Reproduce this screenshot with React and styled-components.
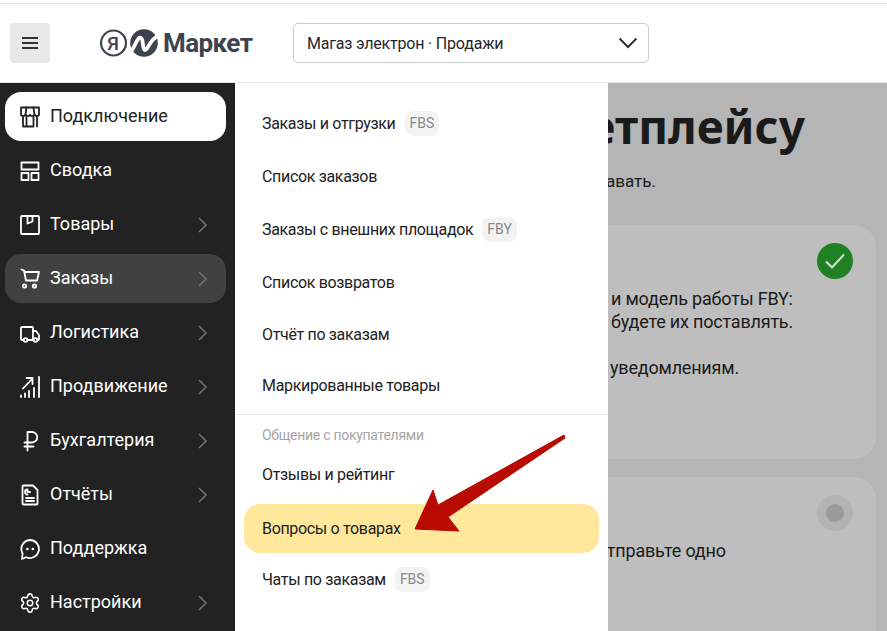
import React from "react";
import styled, { createGlobalStyle } from "styled-components";
import { Settings } from "lucide-react";

const Global = createGlobalStyle`
  html, body { margin: 0; padding: 0; background: #fff; }
  body { font-family: "Roboto", "Noto Sans", "Liberation Sans", sans-serif; color: #1a1a1a; }
  * { box-sizing: border-box; }
`;

const Page = styled.div`
  width: 887px; height: 631px; overflow: hidden;
  display: flex; flex-direction: column; background: #fff;
  padding-top: 3px;
`;
const Header = styled.header`
  height: 80px; flex: none;
  display: flex; align-items: center; padding: 0 238px 0 10px;
  border-top: 1px solid #e0e0e0; border-bottom: 1px solid #e6e6e6;
`;
const MenuButton = styled.button`
  width: 40px; height: 40px; flex: none; border: 0; border-radius: 4px; background: #e8e8e8;
  display: flex; align-items: center; justify-content: center; padding: 0;
`;
const Logo = styled.div`
  width: 243px; flex: none; display: flex; align-items: center; padding-left: 50px;
`;
const LogoWord = styled.span`
  font: 700 26px/40px "Roboto", sans-serif; letter-spacing: -0.6px; color: #3d434e; margin-left: 4px;
`;
const StoreSelect = styled.div`
  flex: 1; height: 40px; border: 1px solid #cbcbcb; border-radius: 5px;
  display: flex; align-items: center; justify-content: space-between; padding: 0 10px 0 13px;
  font-size: 16px; letter-spacing: -0.2px; color: #1f2630;
`;
const Body = styled.div`
  flex: 1; display: flex; min-height: 0;
`;
const Sidebar = styled.nav`
  width: 235px; flex: none; background: #222; padding: 9px 9px 0 5px;
  display: flex; flex-direction: column; gap: 5px; overflow: hidden;
`;
const NavRow = styled.div`
  height: 49px; flex: none; border-radius: 16px; display: flex; align-items: center;
  padding: 0 19px 0 15px; gap: 10px; font-size: 18px; font-weight: 400;
  background: ${(p) => (p.$state === "current" ? "#fff" : p.$state === "open" ? "#414141" : "transparent")};
  color: ${(p) => (p.$state === "current" ? "#222" : "#fff")};
`;
const NavLabel = styled.span` flex: 1; white-space: nowrap; padding-bottom: 2px; `;
const Main = styled.main`
  flex: 1; position: relative; overflow: hidden; background: #b5b5b5; padding: 0 11px 0 0;
`;
const Heading = styled.div`
  display: flex; justify-content: flex-end; padding-right: 71px; margin-top: 10px; height: 73px;
  font: 700 46px/66px "Noto Sans", sans-serif; white-space: nowrap; color: #1a1a1a;
`;
const Subtitle = styled.div`
  display: flex; justify-content: flex-end; padding-right: 220px; height: 59px;
  font-size: 17px; line-height: 30px; white-space: nowrap; color: #1a1a1a;
`;
const Card = styled.section`
  position: relative; border-radius: 22px; background: #bebebe; margin-bottom: 18px;
  height: ${(p) => p.$h}px; padding: ${(p) => p.$top}px 0 0 376px;
`;
const CardLine = styled.div`
  font-size: 18px; letter-spacing: -0.2px; line-height: 23px; white-space: nowrap; color: #1a1a1a;
  height: ${(p) => p.$h || 23}px; margin-left: ${(p) => p.$shift || 0}px;
`;
const StatusDone = styled.div`
  position: absolute; top: 18px; right: 23px; width: 36px; height: 36px; border-radius: 50%;
  background: #1f8024; display: flex; align-items: center; justify-content: center;
`;
const StatusIdle = styled.div`
  position: absolute; top: 18px; right: 23px; width: 36px; height: 36px; border-radius: 50%;
  background: #b3b3b3; display: flex; align-items: center; justify-content: center;
  &::after { content: ""; width: 18px; height: 18px; border-radius: 50%; background: #9a9a9a; }
`;
const Submenu = styled.aside`
  position: absolute; left: 0; top: 0; bottom: 0; width: 373px; background: #fff;
  padding: 14px 9px 0; font-size: 16px; letter-spacing: -0.33px; color: #222;
`;
const SubRow = styled.div`
  height: ${(p) => p.$h || 53}px; border-radius: 16px; display: flex; align-items: center; gap: 9px;
  padding: 0 18px; white-space: nowrap;
  ${(p) => p.$hl && "background: #ffe89c; height: 49px; margin-top: 3px;"}
`;
const Tag = styled.span`
  height: 25px; padding: 0 5px; border-radius: 8px; background: #f3f3f3;
  font-size: 14px; letter-spacing: 0; line-height: 25px; color: #8a8a8a;
`;
const Divider = styled.div` height: 1px; background: #e6e6e6; margin: 3px -9px 0; `;
const GroupTitle = styled.div`
  height: 33px; padding: 8px 18px 0; font-size: 14px; letter-spacing: -0.28px; line-height: 24px; color: #a5a5a5;
`;
const Arrow = styled.svg`
  position: absolute; left: -235px; top: -83px; width: 887px; height: 631px; pointer-events: none;
`;
const GearIcon = styled(Settings)`
  flex: none; width: 22px; height: 22px; margin: 0 -1px;
`;

const s = { fill: "none", stroke: "currentColor", strokeWidth: 1.8, strokeLinecap: "round", strokeLinejoin: "round" };
const Ic = ({ children }) => (
  <svg width="20" height="22" viewBox="0 0 20 22" {...s} style={{ flex: "none" }}>{children}</svg>
);
const icons = {
  store: <Ic><path d="M1 1.500h18v7.500c-1.800 1.800-3.500 1.500-4.500-.5-1.300 2-3.500 2-4.500.2-1 1.800-3.200 1.800-4.500-.2C4.500 10.500 2.800 10.800 1 9Z" /><path d="M6.500 1.500 5.500 8.500M13.500 1.500l1 7" /><path d="M3 10.500V20.500h10.500V11M6.500 11v9.500M17 10.500V20.500" /></Ic>,
  board: <Ic><rect x="1.500" y="2.500" width="17" height="7" /><rect x="1.500" y="13" width="7" height="7" /><rect x="11.500" y="13" width="7" height="7" /></Ic>,
  box: <Ic><rect x="1" y="2" width="18" height="18" rx="1" /><path d="M7.500 2v7.500l5-2V2" /></Ic>,
  cart: <Ic><path d="M1.500 1.500 4 2.500l2 10h11L19 4H4.500" /><circle cx="4.500" cy="18" r="1.700" /><circle cx="14.500" cy="18" r="1.700" /></Ic>,
  truck: <Ic><path d="M3.500 18H2a1 1 0 0 1-1-1V6a1 1 0 0 1 1-1h10a1 1 0 0 1 1 1v12H7.500" /><path d="M13 9h3l3 4v4a1 1 0 0 1-1 1h-.5M13 18h.5" /><circle cx="5.500" cy="18" r="1.900" /><circle cx="15.500" cy="18" r="1.900" /></Ic>,
  growth: <Ic><path d="M3 12.500 12 3M6.500 2h6v6" /><path d="M19 1v20M14 12v9M9 15v6M5 17.500v3.500M1 19.500v1.500" /></Ic>,
  ruble: <Ic><path d="M7.500 20.500V2h4.500a4.800 4.800 0 0 1 0 10.500H4.500M4.500 16.500h9" /></Ic>,
  report: <Ic><path d="M3.500 1.500H13l4.500 4.500v13.500a1 1 0 0 1-1 1h-13a1 1 0 0 1-1-1V2.500a1 1 0 0 1 1-1Z" /><path d="M6 14h8M6 17h8" /><path d="M7.500 10.500a2.500 2.500 0 0 1 0-5v2.500H10" /></Ic>,
  chat: <Ic><path d="M10 2a9 9 0 1 1-3.800 17.200L2 21l.6-5.500A9 9 0 0 1 10 2Z" /><path d="M7.300 11h.2M12.700 11h.2" strokeWidth="2.400" /></Ic>,
  gear: <GearIcon strokeWidth={1.7} />,
};

const Chevron = () => (
  <svg width="9" height="16" viewBox="0 0 9 16" fill="none" stroke="#6f6f6f" strokeWidth="1.600" style={{ flex: "none" }}>
    <path d="M1 1 8 8 1 15" />
  </svg>
);

const nav = [
  ["store", "Подключение", false, "current"],
  ["board", "Сводка", false],
  ["box", "Товары", true],
  ["cart", "Заказы", true, "open"],
  ["truck", "Логистика", true],
  ["growth", "Продвижение", true],
  ["ruble", "Бухгалтерия", true],
  ["report", "Отчёты", true],
  ["chat", "Поддержка", false],
  ["gear", "Настройки", true],
];

export default function App() {
  return (
    <Page>
      <Global />
      <Header>
        <MenuButton aria-label="Меню">
          <svg width="18" height="14" viewBox="0 0 18 14" fill="none" stroke="#333" strokeWidth="2"><path d="M1 2h16M1 7h16M1 12h16" /></svg>
        </MenuButton>
        <Logo>
          <svg width="59" height="28" viewBox="0 0 59 28">
            <circle cx="13.500" cy="14" r="12.500" fill="none" stroke="#3d434e" strokeWidth="2.200" />
            <text x="13" y="20.500" textAnchor="middle" fontFamily="Roboto, sans-serif" fontWeight="500" fontSize="19" fill="#3d434e">Я</text>
            <circle cx="44" cy="14" r="13.800" fill="#3d434e" />
            <path d="M31 23 C35 17 38 7 41 9 C44 11 42 21 45 21 C48 21 50 10 58 7" fill="none" stroke="#fff" strokeWidth="3.800" />
          </svg>
          <LogoWord>Маркет</LogoWord>
        </Logo>
        <StoreSelect>
          <span>Магаз электрон · Продажи</span>
          <svg width="20" height="12" viewBox="0 0 20 12" fill="none" stroke="#333" strokeWidth="2"><path d="M1.500 1.500 10 10l8.500-8.500" /></svg>
        </StoreSelect>
      </Header>
      <Body>
        <Sidebar>
          {nav.map(([icon, label, more, state]) => (
            <NavRow key={label} $state={state}>
              {icons[icon]}
              <NavLabel>{label}</NavLabel>
              {more && <Chevron />}
            </NavRow>
          ))}
        </Sidebar>
        <Main>
          <Heading>к маркетплейсу</Heading>
          <Subtitle>как будете продавать.</Subtitle>
          <Card $h={234} $top={62}>
            <CardLine>и модель работы FBY:</CardLine>
            <CardLine>будете их поставлять.</CardLine>
            <CardLine $h={23} />
            <CardLine $shift={-1}>уведомлениям.</CardLine>
            <StatusDone>
              <svg width="22" height="18" viewBox="0 0 22 18" fill="none" stroke="#d2d8d2" strokeWidth="2.200"><path d="M2 9.500 8 15.500 20 2.500" /></svg>
            </StatusDone>
          </Card>
          <Card $h={200} $top={62}>
            <CardLine $shift={-14}>отправьте одно</CardLine>
            <StatusIdle />
          </Card>
          <Submenu>
            <SubRow>Заказы и отгрузки <Tag>FBS</Tag></SubRow>
            <SubRow>Список заказов</SubRow>
            <SubRow>Заказы с внешних площадок <Tag>FBY</Tag></SubRow>
            <SubRow>Список возвратов</SubRow>
            <SubRow $h={51}>Отчёт по заказам</SubRow>
            <SubRow $h={51}>Маркированные товары</SubRow>
            <Divider />
            <GroupTitle>Общение с покупателями</GroupTitle>
            <SubRow>Отзывы и рейтинг</SubRow>
            <SubRow $hl>Вопросы о товарах</SubRow>
            <SubRow>Чаты по заказам <Tag>FBS</Tag></SubRow>
          </Submenu>
          <Arrow viewBox="0 0 887 631">
            <polygon points="564,435 438,505 433,490 415,529 459,531 448,517 565,438" fill="#b80a00" stroke="#b80a00" strokeWidth="1" strokeLinejoin="round" />
          </Arrow>
        </Main>
      </Body>
    </Page>
  );
}
